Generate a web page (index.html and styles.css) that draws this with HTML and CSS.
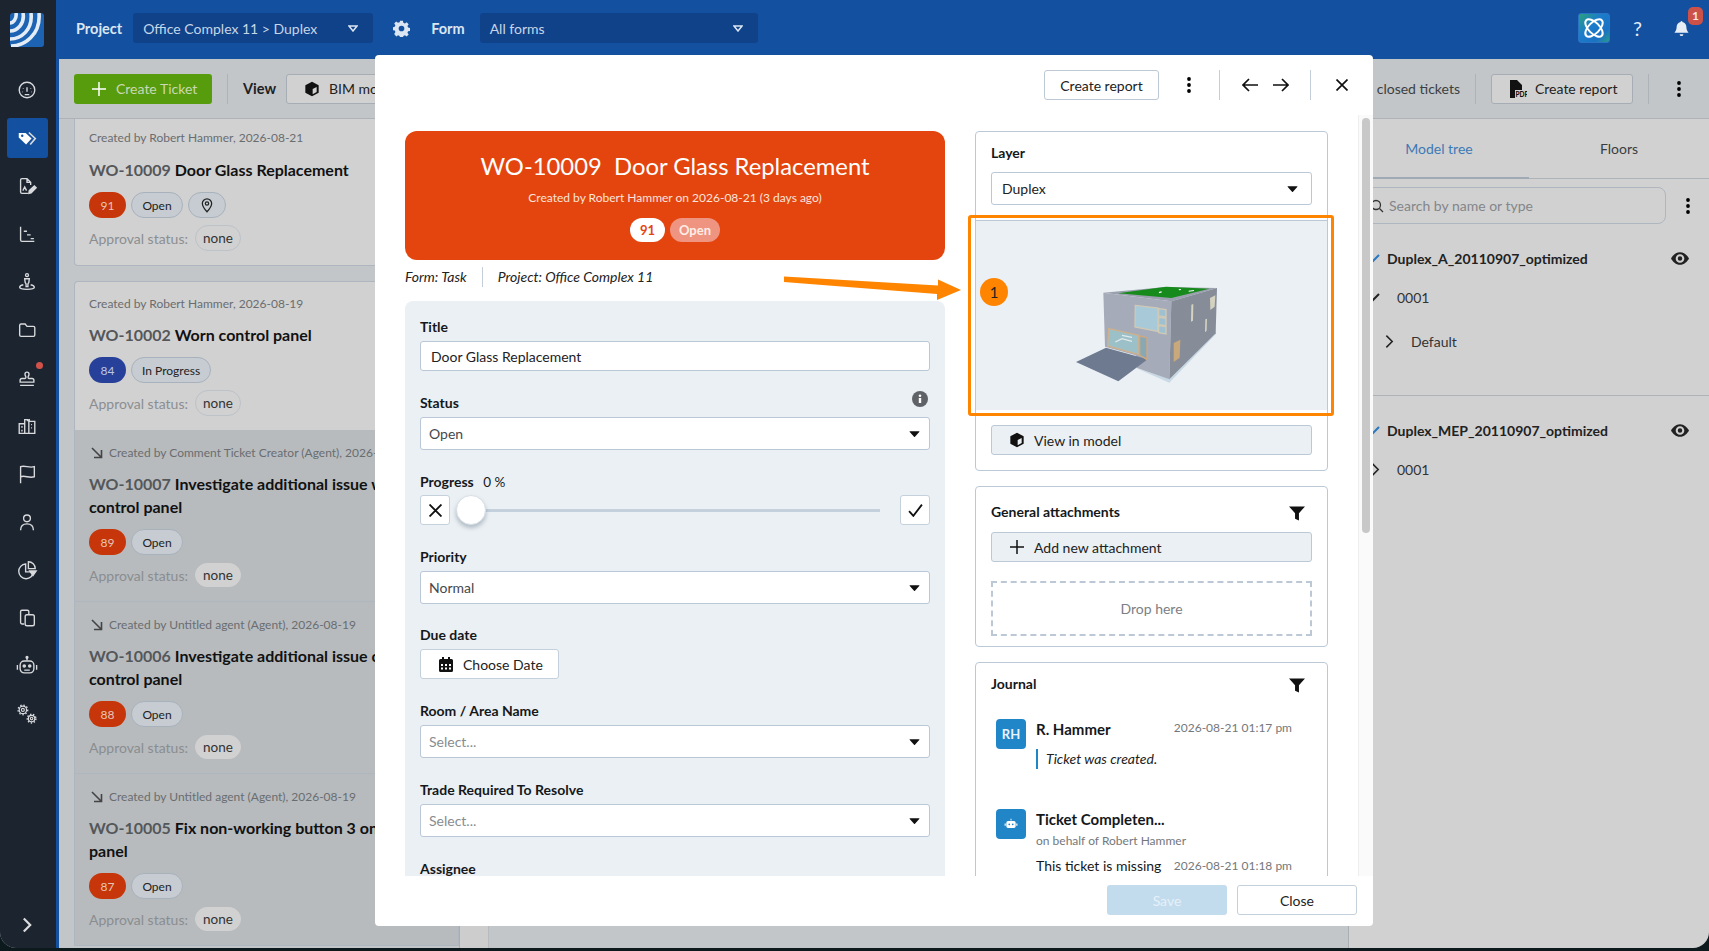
FILE: index.html
```html
<!DOCTYPE html>
<html lang="en">
<head>
    <meta charset="UTF-8">
    <title>Tickets</title>
    <link rel="stylesheet" href="styles.css">
</head>
<body>
<svg class="defs" width="0" height="0">
    <symbol id="cube" viewBox="0 0 24 24"><path fill="#111" fill-rule="evenodd" d="M12 1l10 5.500v11L12 23 2 17.500v-11zM13 12v8l6-3.400V9z"/></symbol>
    <symbol id="caret" viewBox="0 0 14 10"><path fill="#111" d="M1 1.500h12q.6 0 .3.6L7.600 8.400q-.6.6-1.200 0L.7 2.100q-.3-.6.3-.6z"/></symbol>
    <symbol id="filter" viewBox="0 0 18 16"><path fill="#111" d="M0 0h18l-6.800 7.800V16l-4.400-2V7.800z"/></symbol>
    <symbol id="dots" viewBox="0 0 4 16"><circle cx="2" cy="2" r="1.900"/><circle cx="2" cy="8" r="1.900"/><circle cx="2" cy="14" r="1.900"/></symbol>
    <symbol id="eye" viewBox="0 0 20 14"><path fill="#222" fill-rule="evenodd" d="M10 0c4.600 0 8 3.500 10 7-2 3.500-5.400 7-10 7S2 10.500 0 7c2-3.500 5.400-7 10-7zm0 2.200A4.800 4.800 0 1 0 10 11.800 4.800 4.800 0 0 0 10 2.200zm0 2.300a2.500 2.500 0 1 1 0 5 2.500 2.500 0 0 1 0-5z"/></symbol>
    <symbol id="pin" viewBox="0 0 14 18"><path fill="none" stroke="#222" stroke-width="1.500" d="M7 1a5.600 5.600 0 0 1 5.600 5.600C12.600 10.500 7 16.500 7 16.500S1.400 10.500 1.400 6.600A5.600 5.600 0 0 1 7 1z"/><circle cx="7" cy="6.500" r="2" fill="none" stroke="#222" stroke-width="1.500"/></symbol>
    <symbol id="sub" viewBox="0 0 12 12"><path fill="none" stroke="#444" stroke-width="1.600" d="M1 1l9.500 9.500M3 10.500h7.500V3"/></symbol>
    <symbol id="chev" viewBox="0 0 10 16"><path fill="none" stroke="#222" stroke-width="1.700" d="M1.500 1.500L8 8l-6.500 6.500"/></symbol>
    <symbol id="chev-down" viewBox="0 0 14 14"><path fill="none" stroke-width="2" d="M1 4l6 6 6-6"/></symbol>
</svg>

<div class="window">
    <nav class="sidebar">
        <svg class="logo" viewBox="0 0 34 34">
            <rect width="34" height="34" rx="3" fill="#1d63b4"/>
            <path d="M1 33C14 33 31 22 29 0M0 26C11 26 23 17 21 0M0 18C7 18 15 11 13 0M0 10C3 10 7 6 6 0" fill="none" stroke="#e4edf5" stroke-width="3.600"/>
        </svg>
        <a class="nav-item"><svg class="nav-icon" viewBox="0 0 24 24"><circle cx="12" cy="12" r="8.500"/><path d="M12 9v5M8 10v.5M16 10v.5M7 14h.5M16.500 14h.5M9.500 17h5"/></svg></a>
        <a class="nav-item active"><svg class="nav-icon" viewBox="0 0 24 24"><path fill="#fff" stroke="none" d="M3 6.500h7.500L17 12.500 11 19 3 11.500z"/><circle cx="6.800" cy="9.500" r="1.300" fill="#1350a0" stroke="none"/><path d="M14 6l7 6.500-5.500 6.500" stroke-width="1.800"/></svg></a>
        <a class="nav-item"><svg class="nav-icon" viewBox="0 0 24 24"><path d="M13 20H6.500A1.500 1.500 0 0 1 5 18.500v-13A1.500 1.500 0 0 1 6.500 4H12l4 4v3M12 4v4h4M7.500 17l2-4 2 4"/><path fill="#d8dadc" d="M14 20l.5-3 5.500-5 2 2-5.500 5.500z"/></svg></a>
        <a class="nav-item"><svg class="nav-icon" viewBox="0 0 24 24"><path d="M5 4v14.500A1.500 1.500 0 0 0 6.500 20H20M8.500 9H12M12 13h4M16 17h3.500"/></svg></a>
        <a class="nav-item"><svg class="nav-icon" viewBox="0 0 24 24"><circle cx="12" cy="4.500" r="1.600"/><path d="M9.500 8.500h5l-.5 4-1 1.500v3h-2v-3l-1-1.500zM8 15c-2.500.5-4 1.500-4 2.800C4 19.300 7.500 20 12 20s8-.7 8-2.200c0-1.300-1.500-2.300-4-2.800"/></svg></a>
        <a class="nav-item"><svg class="nav-icon" viewBox="0 0 24 24"><path d="M4 7a1.500 1.500 0 0 1 1.500-1.500H10L12 8h7a1.500 1.500 0 0 1 1.500 1.500v8A1.500 1.500 0 0 1 19 19H5.500A1.500 1.500 0 0 1 4 17.500z"/></svg></a>
        <a class="nav-item has-dot"><svg class="nav-icon" viewBox="0 0 24 24"><path d="M4.500 20h15M4.500 16.500h15v-2a2 2 0 0 0-2-2H14c-.8 0-1-1-.7-2 .5-1 .9-1.700.9-2.700a2.200 2.200 0 0 0-4.400 0c0 1 .4 1.700.9 2.700.3 1-.1 2-.7 2H6.500a2 2 0 0 0-2 2z"/></svg></a>
        <a class="nav-item"><svg class="nav-icon" viewBox="0 0 24 24"><path d="M3.500 20V9.500h6V20zM9.500 20V5h3v1h2V5h-1M14 20V7h6.500v13zM3.500 20h17M6.500 12v2M6.500 16v2M16.500 10.500h1M16.500 14h1"/></svg></a>
        <a class="nav-item"><svg class="nav-icon" viewBox="0 0 24 24"><path d="M5 22V4c5-2 9 2 15 0v11c-6 2-10-2-15 0"/></svg></a>
        <a class="nav-item"><svg class="nav-icon" viewBox="0 0 24 24"><circle cx="12" cy="8" r="3.700"/><path d="M5 21c0-4.500 3-7 7-7s7 2.500 7 7"/></svg></a>
        <a class="nav-item"><svg class="nav-icon" viewBox="0 0 24 24"><path d="M10.500 5.500A8 8 0 1 0 19 14h-8.500z"/><path d="M13.500 3a7.500 7.500 0 0 1 7.500 7.500h-7.500z"/><path fill="#d8dadc" d="M15 13h7l-3.500 5z"/></svg></a>
        <a class="nav-item"><svg class="nav-icon" viewBox="0 0 24 24"><path d="M9 18.500H6.500A1.500 1.500 0 0 1 5 17V5a1.500 1.500 0 0 1 1.500-1.500h6A1.500 1.500 0 0 1 14 5v3"/><rect x="10" y="8.500" width="10" height="12" rx="2"/></svg></a>
        <a class="nav-item"><svg class="nav-icon" viewBox="0 0 24 24"><path d="M12 2v4"/><circle cx="12" cy="2.500" r="1" fill="#d8dadc"/><rect x="4.500" y="6.500" width="15" height="13" rx="4.500"/><path d="M1.500 11v5M22.500 11v5M9 16.500h6" /><circle cx="9" cy="12" r="1.200" fill="#d8dadc"/><circle cx="15" cy="12" r="1.200" fill="#d8dadc"/></svg></a>
        <a class="nav-item"><svg class="nav-icon gears" viewBox="0 0 24 24"><circle cx="7.500" cy="7.500" r="1.600" stroke-width="1.200"/><circle cx="7.500" cy="7.500" r="4" stroke-width="1.300"/><circle cx="7.500" cy="7.500" r="5.200" stroke-dasharray="1.500 2" stroke-width="1.600"/><circle cx="17" cy="17" r="1.400" stroke-width="1.200"/><circle cx="17" cy="17" r="3.500" stroke-width="1.300"/><circle cx="17" cy="17" r="4.700" stroke-dasharray="1.500 1.800" stroke-width="1.600"/></svg></a>
        <a class="nav-item expand"><svg class="nav-icon" viewBox="0 0 24 24"><path d="M8.500 5l7 7-7 7" stroke-width="2.400"/></svg></a>
    </nav>

    <div class="main">
        <header class="topbar">
            <span class="top-label">Project</span>
            <div class="top-select project-select"><span>Office Complex 11 &gt; Duplex</span><svg class="top-caret" viewBox="0 0 10 7"><path d="M1 1h8L5 6z"/></svg></div>
            <svg class="gear" viewBox="0 0 24 24"><path fill="#dbe6f2" fill-rule="evenodd" d="M10 1h4l.6 3 2.200.9 2.500-1.700 2.800 2.800-1.700 2.500.9 2.200 3 .6v4l-3 .6-.9 2.200 1.700 2.500-2.800 2.800-2.500-1.700-2.200.9-.6 3h-4l-.6-3-2.200-.9-2.500 1.700L1.700 19.600l1.700-2.500-.9-2.200-3-.6v-4l3-.6.9-2.200L1.700 5l2.800-2.800L7 3.900l2.400-.9zm2 7a4 4 0 1 0 0 8 4 4 0 0 0 0-8z"/></svg>
            <span class="top-label">Form</span>
            <div class="top-select form-select"><span>All forms</span><svg class="top-caret" viewBox="0 0 10 7"><path d="M1 1h8L5 6z"/></svg></div>
            <div class="top-right">
                <div class="app-btn"><svg viewBox="0 0 24 24" width="24" height="24"><g fill="none" stroke="#fff" stroke-width="2"><ellipse cx="12" cy="12" rx="11" ry="5.500" transform="rotate(45 12 12)"/><ellipse cx="12" cy="12" rx="11" ry="5.500" transform="rotate(-45 12 12)"/></g></svg></div>
                <span class="help">?</span>
                <div class="bell">
                    <svg viewBox="0 0 16 18" width="15" height="17"><path fill="#e6edf5" d="M8 1a1 1 0 0 1 1 1c3 .5 4.200 3 4.200 5.500 0 3 1 4.500 2.300 6H.5C1.800 12 2.800 10.500 2.800 7.500 2.800 5 4 2.500 7 2a1 1 0 0 1 1-1zM6 15h4a2 2 0 0 1-4 0z"/></svg>
                    <span class="bell-badge">1</span>
                </div>
            </div>
        </header>

        <div class="toolbar">
            <button class="btn-green"><svg viewBox="0 0 14 14" width="14" height="14"><path d="M7 0v14M0 7h14" stroke="#fff" stroke-width="1.500"/></svg>Create Ticket</button>
            <span class="tool-sep"></span>
            <b class="view-label">View</b>
            <button class="tool-btn"><svg width="16" height="16"><use href="#cube"/></svg>BIM model</button>
            <span class="closed-link">closed tickets</span>
            <span class="tool-sep"></span>
            <button class="tool-btn report-btn">
                <svg viewBox="0 0 18 18" width="18" height="18"><path fill="#111" d="M1 0h7l5 5v5H6v8H1z"/><text x="6.500" y="17" font-size="6.500" font-weight="900" fill="#111" font-family="Lato">PDF</text></svg>
                Create report
            </button>
            <span class="tool-sep"></span>
            <svg class="tool-dots" width="4" height="16"><use href="#dots"/></svg>
        </div>

        <div class="workspace">
            <section class="list">
                <article class="card first">
                    <p class="created">Created by Robert Hammer, 2026-08-21</p>
                    <h3 class="ticket-title"><span>WO-10009</span> Door Glass Replacement</h3>
                    <div class="chips"><span class="chip red">91</span><span class="chip">Open</span><span class="chip pin-chip"><svg width="12" height="15"><use href="#pin"/></svg></span></div>
                    <div class="approval">Approval status: <span class="none">none</span></div>
                </article>
                <article class="card second">
                    <p class="created">Created by Robert Hammer, 2026-08-19</p>
                    <h3 class="ticket-title"><span>WO-10002</span> Worn control panel</h3>
                    <div class="chips"><span class="chip blue">84</span><span class="chip">In Progress</span></div>
                    <div class="approval">Approval status: <span class="none">none</span></div>
                </article>
                <article class="card agent">
                    <p class="created"><svg width="12" height="12"><use href="#sub"/></svg>Created by Comment Ticket Creator (Agent), 2026-08-19</p>
                    <h3 class="ticket-title"><span>WO-10007</span> Investigate additional issue with control panel</h3>
                    <div class="chips"><span class="chip red">89</span><span class="chip">Open</span></div>
                    <div class="approval">Approval status: <span class="none">none</span></div>
                </article>
                <article class="card agent">
                    <p class="created"><svg width="12" height="12"><use href="#sub"/></svg>Created by Untitled agent (Agent), 2026-08-19</p>
                    <h3 class="ticket-title"><span>WO-10006</span> Investigate additional issue on control panel</h3>
                    <div class="chips"><span class="chip red">88</span><span class="chip">Open</span></div>
                    <div class="approval">Approval status: <span class="none">none</span></div>
                </article>
                <article class="card agent">
                    <p class="created"><svg width="12" height="12"><use href="#sub"/></svg>Created by Untitled agent (Agent), 2026-08-19</p>
                    <h3 class="ticket-title"><span>WO-10005</span> Fix non-working button 3 on control panel</h3>
                    <div class="chips"><span class="chip red">87</span><span class="chip">Open</span></div>
                    <div class="approval">Approval status: <span class="none">none</span></div>
                </article>
            </section>
            <div class="splitter"></div>
            <div class="map"></div>
            <aside class="tree">
                <div class="tabs"><span class="tab current">Model tree</span><span class="tab">Floors</span></div>
                <div class="search-row">
                    <div class="search-box"><svg viewBox="0 0 14 14" width="14" height="14"><circle cx="6" cy="6" r="4.500" fill="none" stroke="#333" stroke-width="1.300"/><path d="M9.500 9.500L13 13" stroke="#333" stroke-width="1.300"/></svg>Search by name or type</div>
                    <svg width="4" height="16"><use href="#dots"/></svg>
                </div>
                <div class="tree-group">
                    <div class="tree-head"><svg class="tree-open blue-mark" width="14" height="14"><use href="#chev-down"/></svg><b>Duplex_A_20110907_optimized</b><svg class="eye" width="18" height="13"><use href="#eye"/></svg></div>
                    <div class="tree-row level-1"><svg class="tree-open" width="14" height="14"><use href="#chev-down"/></svg>0001</div>
                    <div class="tree-row level-2"><svg width="9" height="15"><use href="#chev"/></svg>Default</div>
                </div>
                <div class="tree-group last">
                    <div class="tree-head"><svg class="tree-open blue-mark" width="14" height="14"><use href="#chev-down"/></svg><b>Duplex_MEP_20110907_optimized</b><svg class="eye" width="18" height="13"><use href="#eye"/></svg></div>
                    <div class="tree-row level-1 closed"><svg width="9" height="15"><use href="#chev"/></svg>0001</div>
                </div>
            </aside>
        </div>
    </div>

    <div class="modal">
        <div class="modal-top">
            <button class="ghost-btn">Create report</button>
            <svg class="modal-dots" width="4" height="16"><use href="#dots"/></svg>
            <span class="modal-sep"></span>
            <svg class="arrow-icon" viewBox="0 0 16 14" width="16" height="14"><path d="M16 7H1M7 1L1 7l6 6" fill="none" stroke="#111" stroke-width="1.700"/></svg>
            <svg class="arrow-icon" viewBox="0 0 16 14" width="16" height="14"><path d="M0 7h15M9 1l6 6-6 6" fill="none" stroke="#111" stroke-width="1.700"/></svg>
            <span class="modal-sep"></span>
            <svg class="close-x" viewBox="0 0 12 12" width="12" height="12"><path d="M.5.5l11 11M11.500.5l-11 11" stroke="#111" stroke-width="1.700"/></svg>
        </div>
        <div class="modal-body">
            <div class="col-left">
                <div class="hero">
                    <h1>WO-10009&nbsp; Door Glass Replacement</h1>
                    <p>Created by Robert Hammer on 2026-08-21 (3 days ago)</p>
                    <div class="hero-chips"><span class="hero-num">91</span><span class="hero-status">Open</span></div>
                </div>
                <div class="meta"><i>Form: Task</i><span class="meta-sep"></span><i>Project: Office Complex 11</i></div>
                <form class="form-panel">
                    <div class="field">
                        <label>Title</label>
                        <div class="input">Door Glass Replacement</div>
                    </div>
                    <div class="field">
                        <label class="label-row">Status
                            <svg viewBox="0 0 16 16" width="16" height="16"><circle cx="8" cy="8" r="8" fill="#5f6368"/><rect x="6.800" y="7" width="2.400" height="5" fill="#fff"/><circle cx="8" cy="4.700" r="1.300" fill="#fff"/></svg>
                        </label>
                        <div class="select">Open<svg width="11" height="8"><use href="#caret"/></svg></div>
                    </div>
                    <div class="field">
                        <label>Progress <span class="percent">0 %</span></label>
                        <div class="slider-row">
                            <span class="square-btn"><svg viewBox="0 0 12 12" width="13" height="13"><path d="M.5.500l11 11M11.500.500l-11 11" stroke="#111" stroke-width="1.700"/></svg></span>
                            <div class="slider"><span class="thumb"></span></div>
                            <span class="square-btn"><svg viewBox="0 0 14 12" width="15" height="13"><path d="M1 6.500L5 11l8-10.500" fill="none" stroke="#111" stroke-width="1.700"/></svg></span>
                        </div>
                    </div>
                    <div class="field short">
                        <label>Priority</label>
                        <div class="select">Normal<svg width="11" height="8"><use href="#caret"/></svg></div>
                    </div>
                    <div class="field">
                        <label>Due date</label>
                        <button type="button" class="date-btn"><svg viewBox="0 0 14 15" width="14" height="15"><path fill="#111" fill-rule="evenodd" d="M3 0h2v2h4V0h2v2h1.500A1.500 1.500 0 0 1 14 3.500v10a1.500 1.500 0 0 1-1.500 1.500h-11A1.500 1.500 0 0 1 0 13.500v-10A1.500 1.500 0 0 1 1.500 2H3zM2 7v2h2V7zm4 0v2h2V7zm4 0v2h2V7zm-8 3.500v2h2v-2zm4 0v2h2v-2zm4 0v2h2v-2z"/></svg>Choose Date</button>
                    </div>
                    <div class="field">
                        <label>Room / Area Name</label>
                        <div class="select placeholder">Select...<svg width="11" height="8"><use href="#caret"/></svg></div>
                    </div>
                    <div class="field">
                        <label>Trade Required To Resolve</label>
                        <div class="select placeholder">Select...<svg width="11" height="8"><use href="#caret"/></svg></div>
                    </div>
                    <div class="field">
                        <label>Assignee</label>
                    </div>
                </form>
            </div>
            <div class="col-right">
                <section class="panel layer-panel">
                    <div class="panel-inner">
                        <h4>Layer</h4>
                        <div class="select layer-select">Duplex<svg width="11" height="8"><use href="#caret"/></svg></div>
                    </div>
                    <div class="model-view">
                        <svg viewBox="0 0 540 360" width="180" height="120">
                            <path fill="#c9d8e5" d="M222 288l100 44 140-146-2-6-140 140z"/>
                            <path fill="#9aa0ad" d="M124 62l204 26 137-40-155-3z"/>
                            <path fill="#178a1c" d="M168 64l160 14 114-28-130-6z"/>
                            <path fill="#a6abb9" d="M124 62l204 26-6 234-97-34-4-38-92-26z"/>
                            <path fill="#868d99" d="M328 88l137-40-4 136-139 138z"/>
                            <path fill="#6d7a90" d="M42 270l90-43 125 35-88 66z"/>
                            <path fill="#a8c9d8" stroke="#cfc9b6" stroke-width="4" d="M220 100l68 8-1 70-68-13z"/>
                            <path fill="#9ec0d0" stroke="#cfc9b6" stroke-width="4" d="M290 110l22 3v22l-22-3zM290 136l22 3v22l-22-3zM290 161l22 3v22l-22-4z"/>
                            <path fill="#9cc0c8" stroke="#cfb08c" stroke-width="4" d="M140 170l90 20 1 58-94-26z"/>
                            <path fill="#88a8b4" stroke="#cfa880" stroke-width="4" d="M233 192l22 5v66l-22-14z"/>
                            <path fill="none" stroke="#e2eaea" stroke-width="4" d="M160 210l20-10 30 8M180 190l30 6"/>
                            <path fill="#c9a87c" d="M335 213l20-10-2 54-18 13z"/>
                            <path fill="#d4d2c0" d="M388 98l6-2-1 50-6 3zM430 142l5-2-1 36-5 5zM444 78l16-8-2 34-13 10z"/>
                            <path fill="#fff" d="M290 60l8-2 2 3-8 3zM350 52l6-1 1 3-6 1zM380 56l16-2v3l-16 2z"/>
                        </svg>
                    </div>
                    <div class="panel-inner bottom">
                        <button type="button" class="wide-btn"><svg width="16" height="16"><use href="#cube"/></svg>View in model</button>
                    </div>
                </section>
                <section class="panel attach-panel">
                    <div class="panel-head"><h4>General attachments</h4><svg width="16" height="15"><use href="#filter"/></svg></div>
                    <button type="button" class="wide-btn"><svg class="plus" viewBox="0 0 14 14" width="14" height="14"><path d="M7 0v14M0 7h14" stroke="#111" stroke-width="1.500"/></svg>Add new attachment</button>
                    <div class="drop-zone">Drop here</div>
                </section>
                <section class="panel journal-panel">
                    <div class="panel-head"><h4>Journal</h4><svg width="16" height="15"><use href="#filter"/></svg></div>
                    <div class="entry">
                        <div class="avatar">RH</div>
                        <div class="entry-main">
                            <div class="entry-head"><b>R. Hammer</b><time>2026-08-21 01:17 pm</time></div>
                            <blockquote>Ticket was created.</blockquote>
                        </div>
                    </div>
                    <div class="entry second-entry">
                        <div class="avatar"><svg viewBox="0 0 24 24" width="14" height="14"><path fill="#fff" d="M11.200 3h1.600v3h-1.600zM7 7h10a3 3 0 0 1 3 3v6a3 3 0 0 1-3 3H7a3 3 0 0 1-3-3v-6a3 3 0 0 1 3-3zM1 11h2v4H1zM21 11h2v4h-2z"/><circle cx="9" cy="12.500" r="1.500" fill="#2186c8"/><circle cx="15" cy="12.500" r="1.500" fill="#2186c8"/></svg></div>
                        <div class="entry-main">
                            <div class="entry-head"><b>Ticket Completen...</b></div>
                            <p class="behalf">on behalf of Robert Hammer</p>
                            <div class="entry-head message"><span>This ticket is missing</span><time>2026-08-21 01:18 pm</time></div>
                        </div>
                    </div>
                </section>
            </div>
            <div class="scroll-track"><span class="scroll-thumb"></span></div>
        </div>
        <div class="modal-foot">
            <button class="save-btn">Save</button>
            <button class="close-btn">Close</button>
        </div>
    </div>

    <!-- annotation drawn over the screenshot -->
    <svg class="callout-arrow" viewBox="0 0 180 30" width="180" height="30"><path fill="#ff8400" d="M0 2.500l154 9 0-6 23 10.500-24 10 0-6L0 8z"/></svg>
    <div class="callout-box"></div>
    <div class="callout-num">1</div>
</div>
</body>
</html>
```

FILE: styles.css
```css
* {
    box-sizing: border-box;
}
html, body {
    margin: 0;
    height: 951px;
    overflow: hidden;
}
body {
    background-color: #0c1a1e;
    font-family: "Lato", "Liberation Sans", sans-serif;
    color: #1d2125;
    font-size: 14px;
}
button {
    font-family: inherit;
}
.defs {
    position: absolute;
}
.window {
    position: relative;
    height: 948px;
    display: flex;
    overflow: hidden;
    border-radius: 0 0 16px 16px;
    background-color: #d1d1d1;
}

/* sidebar */
.sidebar {
    width: 56px;
    flex: none;
    background-color: #1c2430;
    display: flex;
    flex-direction: column;
    align-items: center;
    padding: 13px 2px 0 0;
}
.logo {
    width: 34px;
    height: 34px;
    margin-bottom: 23px;
}
.nav-item {
    width: 41px;
    height: 40px;
    margin-bottom: 8px;
    flex: none;
    display: flex;
    align-items: center;
    justify-content: center;
    border-radius: 3px;
    position: relative;
}
.nav-item.active {
    background-color: #1350a0;
}
.nav-item.has-dot::after {
    content: "";
    position: absolute;
    width: 7px;
    height: 7px;
    border-radius: 50%;
    background-color: #d2524a;
    top: 4px;
    right: 5px;
}
.nav-item.expand {
    margin-top: auto;
    margin-bottom: 3px;
}
.nav-icon {
    width: 22px;
    height: 22px;
    fill: none;
    stroke: #d8dadc;
    stroke-width: 1.5;
}

/* main area */
.main {
    flex: 1;
    min-width: 0;
    border-left: 3px solid #1350a0;
    display: flex;
    flex-direction: column;
}
.topbar {
    height: 59px;
    margin-left: -3px;
    padding-left: 20px;
    background-color: #1350a0;
    display: flex;
    align-items: center;
    flex: none;
    padding-bottom: 3px;
}
.top-label {
    color: #dbe6f2;
    font-weight: 700;
    font-size: 14.5px;
}
.top-select {
    height: 30px;
    display: flex;
    align-items: center;
    justify-content: space-between;
    padding: 0 15px 0 10px;
    margin-left: 11px;
    background-color: #10428a;
    border-radius: 3px;
    color: #c7d6e8;
    font-size: 14px;
}
.project-select {
    width: 240px;
}
.form-select {
    width: 278px;
    margin-left: 15px;
}
.top-caret {
    width: 10px;
    height: 7px;
    fill: none;
    stroke: #dbe6f2;
    stroke-width: 1.5;
}
.gear {
    width: 17px;
    height: 17px;
    margin: 0 21px 0 20px;
}
.top-right {
    margin-left: auto;
    display: flex;
    align-items: center;
    padding-right: 20px;
}
.app-btn {
    width: 32px;
    height: 30px;
    border-radius: 3px;
    border: 1px solid #2b74c4;
    background: linear-gradient(135deg, #2aa27a 0%, #1c7ccc 40%, #1b72c4 75%, #2a9a8c 100%);
    display: flex;
    align-items: center;
    justify-content: center;
}
.help {
    color: #e6edf5;
    font-size: 20px;
    margin: 0 32px 0 23px;
}
.bell {
    position: relative;
    height: 17px;
}
.bell-badge {
    position: absolute;
    left: 14px;
    top: -13px;
    width: 15px;
    height: 18px;
    border-radius: 5px;
    background-color: #cc5148;
    color: #f5e6e4;
    font-size: 12px;
    font-weight: 700;
    text-align: center;
    line-height: 18px;
}
.toolbar {
    height: 60px;
    flex: none;
    background-color: #c2c6c9;
    border-bottom: 1px solid #aeb3b8;
    padding-left: 15px;
    display: flex;
    align-items: center;
}
.btn-green {
    width: 138px;
    height: 30px;
    background-color: #579c0c;
    border: none;
    border-radius: 3px;
    color: #c9d8b6;
    font-size: 14px;
    display: flex;
    align-items: center;
    gap: 10px;
    padding-left: 18px;
}
.tool-sep {
    width: 1px;
    height: 30px;
    background-color: #adb3b9;
}
.btn-green + .tool-sep {
    margin-left: 15px;
}
.view-label {
    margin: 0 10px 0 15px;
    font-size: 14.5px;
}
.tool-btn {
    height: 30px;
    display: flex;
    align-items: center;
    gap: 9px;
    border: 1px solid #a6adb5;
    border-radius: 3px;
    background-color: #d1d1d1;
    color: #222;
    font-size: 14px;
    padding: 0 17px;
    width: 400px;
}
.closed-link {
    margin-left: auto;
    color: #3c3f42;
    font-size: 14px;
    margin-right: 15px;
}
.report-btn {
    width: 142px;
    margin: 0 15px;
    padding: 0 0 0 17px;
    gap: 8px;
}
.tool-dots {
    margin: 0 28px 0 28px;
}
.workspace {
    flex: 1;
    min-height: 0;
    display: flex;
}

/* ticket list */
.list {
    width: 400px;
    flex: none;
    padding-left: 15px;
    background-color: #c2c6c9;
    overflow: hidden;
}
.card {
    padding: 13px 15px 14px 14px;
    background-color: #d1d1d1;
    border-left: 1px solid #aeb6bf;
    border-right: 1px solid #aeb6bf;
    border-bottom: 1px solid #aeb6bf;
    height: 149px;
}
.card.first {
    padding-top: 9px;
    height: 146.5px;
    border-radius: 0 0 0 4px;
    margin-bottom: 15.5px;
}
.card.second {
    border-top: 1px solid #aeb6bf;
    border-radius: 4px 0 0 0;
    padding-top: 12px;
    border-bottom: none;
}
.card.agent {
    height: 172px;
    background-color: #b7bbbe;
}
.created {
    margin: 0;
    height: 20px;
    line-height: 20px;
    font-size: 12px;
    color: #6a6d70;
    white-space: nowrap;
    display: flex;
    align-items: center;
}
.created svg {
    margin: 0 6px 0 2px;
    flex: none;
}
.ticket-title {
    margin: 9px 0 11px;
    font-size: 16px;
    line-height: 23px;
    color: #111;
}
.card.first .ticket-title {
    margin-top: 10px;
}
.ticket-title span {
    color: #54575a;
}
.chips {
    display: flex;
    gap: 5px;
    height: 26px;
}
.chip {
    height: 26px;
    min-width: 52px;
    padding: 0 10px;
    display: flex;
    align-items: center;
    justify-content: center;
    border-radius: 13px;
    border: 1px solid #a8b2bc;
    background-color: #c6ccd2;
    font-size: 12px;
    color: #222;
}
.chip.red,
.chip.blue {
    min-width: 37px;
    border: none;
    color: #e8c4b4;
}
.chip.red {
    background-color: #c6360a;
}
.chip.blue {
    background-color: #27409a;
    color: #bcc6e4;
}
.pin-chip {
    width: 38px;
    min-width: 38px;
    padding: 0;
}
.approval {
    margin-top: 7px;
    height: 26px;
    display: flex;
    align-items: center;
    gap: 7px;
    color: #8b8e91;
    font-size: 14px;
}
.none {
    height: 26px;
    padding: 0 7px;
    display: flex;
    align-items: center;
    border-radius: 13px;
    border: 1px solid #bcc2c8;
    color: #333;
    font-size: 13.5px;
}
.agent .none {
    background-color: #d1d1d1;
    border-color: #d1d1d1;
    height: 24px;
}
.agent .approval {
    color: #8a8d90;
}
.splitter {
    width: 29px;
    flex: none;
    border-left: 1px solid #a9aeb3;
    background-color: #cdcdcd;
}
.map {
    width: 861px;
    flex: none;
    background-color: #c2c6c9;
    border-left: 1px solid #b6bbc0;
    border-right: 1px solid #a9aeb3;
}

/* right hand tree behind the modal */
.tree {
    flex: 1;
    min-width: 0;
}
.tabs {
    display: flex;
    height: 60px;
    border-bottom: 1px solid #aeb3b8;
}
.tab {
    width: 180px;
    display: flex;
    align-items: center;
    justify-content: center;
    font-size: 14px;
    color: #3a3d40;
}
.tab.current {
    color: #3d7ab5;
    border-bottom: 2px solid #a0aab4;
    margin-bottom: -1px;
}
.search-row {
    display: flex;
    align-items: center;
    margin-top: 8px;
    height: 37px;
}
.search-box {
    width: 317px;
    height: 37px;
    border: 1px solid #aeb6bf;
    border-radius: 8px;
    display: flex;
    align-items: center;
    gap: 5px;
    padding-left: 20px;
    color: #83868a;
    font-size: 14px;
}
.search-row > svg {
    margin-left: 20px;
}
.tree-group {
    padding-top: 24px;
    height: 172px;
    border-bottom: 1px solid #aeb3b8;
    color: #333;
}
.tree-group.last {
    border-bottom: none;
    padding-top: 24px;
}
.tree-head {
    height: 20px;
    display: flex;
    align-items: center;
    padding: 0 20px 0 17px;
    font-size: 14px;
    color: #222;
}
.tree-head b {
    margin-left: 7px;
}
.tree-head .eye {
    margin-left: auto;
}
.tree-open {
    stroke: #222;
    flex: none;
}
.blue-mark {
    stroke: #2a78c0;
}
.tree-row {
    height: 20px;
    display: flex;
    align-items: center;
    margin-top: 19px;
    font-size: 14px;
}
.level-1 {
    padding-left: 17px;
    gap: 17px;
}
.level-1.closed {
    padding-left: 22px;
    gap: 17px;
}
.level-2 {
    padding-left: 36px;
    margin-top: 24px;
    gap: 17px;
}

/* modal */
.modal {
    position: absolute;
    left: 375px;
    top: 55px;
    width: 998px;
    height: 871px;
    background-color: #fff;
    border-radius: 4px;
    display: flex;
    flex-direction: column;
}
.modal-top {
    height: 60px;
    flex: none;
    display: flex;
    align-items: center;
    justify-content: flex-end;
    padding-right: 25px;
}
.ghost-btn {
    width: 115px;
    height: 30px;
    background-color: #fff;
    border: 1px solid #bcc8d4;
    border-radius: 3px;
    font-size: 14px;
    color: #222;
}
.modal-dots {
    margin: 0 28px;
}
.modal-sep {
    width: 1px;
    height: 30px;
    background-color: #c4ced8;
}
.arrow-icon {
    margin-left: 15px;
}
.arrow-icon + .arrow-icon {
    margin-right: 21px;
}
.modal-sep + .arrow-icon {
    margin-left: 22px;
}
.close-x {
    margin-left: 25px;
}
.modal-body {
    flex: 1;
    min-height: 0;
    display: flex;
    padding-left: 30px;
    overflow: hidden;
}
.col-left {
    width: 540px;
    flex: none;
    padding-top: 16px;
}
.hero {
    height: 129px;
    background-color: #e4450e;
    border-radius: 12px;
    color: #fff;
    text-align: center;
    padding-top: 18px;
}
.hero h1 {
    margin: 0;
    font-size: 23.8px;
    line-height: 34px;
    font-weight: 400;
}
.hero p {
    margin: 5px 0 0;
    font-size: 12px;
    line-height: 20px;
    color: #fbe4da;
}
.hero-chips {
    margin-top: 10px;
    display: flex;
    justify-content: center;
    gap: 5px;
}
.hero-num,
.hero-status {
    height: 24px;
    border-radius: 12px;
    display: flex;
    align-items: center;
    justify-content: center;
    font-size: 13px;
    font-weight: 700;
}
.hero-num {
    width: 35px;
    background-color: #fff;
    color: #e4450e;
}
.hero-status {
    width: 50px;
    background-color: #ef9480;
    color: #fdeee8;
}
.meta {
    height: 33px;
    margin-bottom: 8px;
    display: flex;
    align-items: center;
    font-size: 14px;
    color: #222;
}
.meta-sep {
    width: 1px;
    height: 20px;
    margin: 0 15px;
    background-color: #c4ced8;
}
.form-panel {
    background-color: #ebf0f4;
    border-radius: 8px 8px 0 0;
    padding: 15px;
    height: 600px;
}
.field {
    margin-bottom: 21px;
}
.field.short {
    margin-bottom: 20px;
}
.field label {
    display: block;
    height: 20px;
    line-height: 21px;
    margin-bottom: 5px;
    font-weight: 700;
    font-size: 14px;
    color: #15181b;
}
.label-row {
    display: flex !important;
    justify-content: space-between;
    align-items: flex-start;
}
.label-row svg {
    margin: -1px 2px 0 0;
}
.percent {
    font-weight: 400;
    margin-left: 6px;
    font-size: 13.5px;
}
.input,
.select {
    background-color: #fff;
    border: 1px solid #b9c7d6;
    border-radius: 3px;
    display: flex;
    align-items: center;
    font-size: 14px;
}
.input {
    height: 30px;
    padding-left: 10px;
}
.select {
    height: 33px;
    padding: 0 9px 0 8px;
    justify-content: space-between;
    color: #44484c;
}
.select.placeholder {
    color: #888c90;
}
.slider-row {
    display: flex;
    align-items: center;
    height: 30px;
    margin-top: -1px;
}
.square-btn {
    width: 30px;
    height: 30px;
    flex: none;
    background-color: #fff;
    border: 1px solid #c4d0dc;
    border-radius: 3px;
    display: flex;
    align-items: center;
    justify-content: center;
}
.slider {
    flex: 1;
    position: relative;
    height: 3px;
    background-color: #c4d0dc;
    margin: 0 20px 0 6px;
}
.thumb {
    position: absolute;
    left: 0;
    top: -14px;
    width: 30px;
    height: 30px;
    border-radius: 50%;
    background-color: #fff;
    border: 1px solid #d8e0e8;
    box-shadow: 0 3px 4px rgba(70, 90, 110, 0.35);
}
.date-btn {
    width: 139px;
    height: 30px;
    background-color: #fff;
    border: 1px solid #c4d0dc;
    border-radius: 3px;
    display: flex;
    align-items: center;
    gap: 10px;
    padding-left: 18px;
    font-size: 14px;
    color: #222;
}
.col-right {
    width: 353px;
    margin-left: 30px;
    flex: none;
    padding-top: 16px;
}
.panel {
    border: 1px solid #bcc8d6;
    border-radius: 4px;
    background-color: #fff;
    margin-bottom: 15px;
}
.panel h4 {
    margin: 0;
    font-size: 14px;
    line-height: 20px;
    font-weight: 700;
    color: #15181b;
}
.panel-inner {
    padding: 11px 15px 15px;
}
.panel-inner.bottom {
    padding: 15px 15px 15px;
}
.layer-select {
    height: 33px;
    margin-top: 9px;
    font-size: 14px;
    padding: 0 13px 0 10px;
    color: #222;
}
.model-view {
    height: 190px;
    background-color: #ebf0f4;
    border-top: 1px solid #bcc8d6;
    display: flex;
    align-items: center;
    justify-content: center;
    padding-top: 33px;
}
.wide-btn {
    width: 100%;
    height: 30px;
    display: flex;
    align-items: center;
    gap: 9px;
    padding-left: 17px;
    background-color: #ebf0f4;
    border: 1px solid #bcc8d6;
    border-radius: 3px;
    font-size: 14px;
    color: #222;
}
.wide-btn .plus {
    margin: 0 1px 0 1px;
}
.attach-panel {
    height: 161px;
    padding: 15px 15px 0;
}
.panel-head {
    display: flex;
    justify-content: space-between;
    align-items: center;
    height: 20px;
    padding-right: 7px;
}
.panel-head svg {
    margin-top: 3px;
}
.attach-panel .wide-btn {
    margin-top: 10px;
}
.drop-zone {
    height: 55px;
    margin-top: 19px;
    border: 2px dashed #bcc8d6;
    display: flex;
    align-items: center;
    justify-content: center;
    color: #7c8084;
    font-size: 14px;
}
.journal-panel {
    height: 300px;
    padding: 11px 15px 0;
    margin-bottom: 0;
}
.entry {
    display: flex;
    margin: 25px 0 0 5px;
    gap: 10px;
}
.second-entry {
    margin-top: 40px;
}
.avatar {
    width: 30px;
    height: 30px;
    flex: none;
    background-color: #2186c8;
    border-radius: 4px;
    color: #e8f2fa;
    display: flex;
    align-items: center;
    justify-content: center;
    font-weight: 700;
    font-size: 13px;
}
.entry-main {
    flex: 1;
    min-width: 0;
}
.entry-head {
    display: flex;
    justify-content: space-between;
    align-items: flex-start;
    padding-right: 20px;
    height: 22px;
    font-size: 15px;
    color: #15181b;
    white-space: nowrap;
}
.entry-head b {
    line-height: 20px;
}
.entry-head time {
    color: #74787c;
    font-size: 12px;
    line-height: 18px;
}
blockquote {
    margin: 8px 0 0;
    height: 20px;
    line-height: 20px;
    border-left: 2px solid #2186c8;
    padding-left: 8px;
    font-style: italic;
    font-size: 14px;
    color: #222;
}
.behalf {
    margin: 1px 0 0;
    color: #74787c;
    font-size: 12px;
    line-height: 18px;
}
.message {
    margin-top: 7px;
    font-size: 14px;
}
.scroll-track {
    width: 15px;
    margin-left: 30px;
    flex: none;
    background-color: #fafafa;
    border-left: 1px solid #eee;
    padding: 3px 3px 0 3px;
}
.scroll-thumb {
    display: block;
    width: 8px;
    height: 415px;
    background-color: #c8c8c8;
    border-radius: 4px;
}
.modal-foot {
    height: 50px;
    flex: none;
    display: flex;
    justify-content: flex-end;
    gap: 10px;
    padding: 9px 16px 0 0;
}
.save-btn,
.close-btn {
    width: 120px;
    height: 30px;
    border-radius: 3px;
    font-size: 14px;
}
.save-btn {
    background-color: #c2dcee;
    border: none;
    color: #e6f0f7;
}
.close-btn {
    background-color: #fff;
    border: 1px solid #c4d0dc;
    color: #222;
}

/* orange annotation */
.callout-arrow {
    position: absolute;
    left: 784px;
    top: 274px;
}
.callout-box {
    position: absolute;
    left: 968px;
    top: 215px;
    width: 366px;
    height: 201px;
    border: 3px solid #ff8400;
    border-radius: 3px;
}
.callout-num {
    position: absolute;
    left: 980px;
    top: 278px;
    width: 28px;
    height: 28px;
    border-radius: 50%;
    background-color: #ff8400;
    display: flex;
    align-items: center;
    justify-content: center;
    font-size: 15px;
    color: #222;
}
```
